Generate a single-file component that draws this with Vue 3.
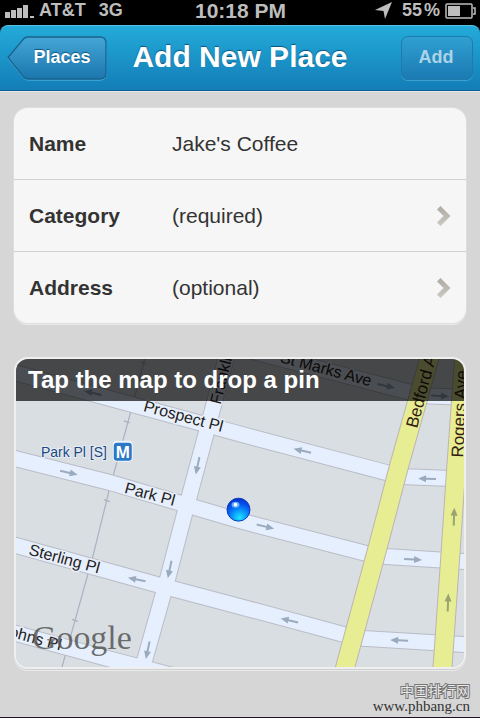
<template>
  <div class="page">
    <div class="top">
      <div class="status-bar">
        <div class="status-left">
          <svg class="signal" width="29" height="14" viewBox="0 0 29 14">
            <rect x="0" y="8" width="5" height="6" />
            <rect x="6" y="6" width="5" height="8" />
            <rect x="12" y="4" width="5" height="10" />
            <rect x="18" y="1" width="5" height="13" />
            <rect x="25" y="12" width="4" height="2" />
          </svg>
          <span>AT&amp;T</span>
          <span class="network">3G</span>
        </div>
        <span class="clock">10:18 PM</span>
        <div class="status-right">
          <svg width="17" height="17" viewBox="0 0 17 17">
            <path d="M17 0 L10 17 L8.500 9 L0 8 Z" />
          </svg>
          <span class="percent">55<span>%</span></span>
          <svg width="31" height="16" viewBox="0 0 31 16">
            <rect x="1" y="1" width="26" height="14" rx="1" fill="none" stroke="#bdbdbd" stroke-width="1.5" />
            <rect x="3" y="3" width="12" height="10" />
            <path d="M28 5 H30 V11 H28" fill="none" stroke="#bdbdbd" stroke-width="1.5" />
          </svg>
        </div>
      </div>

      <header class="nav-bar">
        <button type="button" class="back-button">
          <svg class="back-shape" width="100" height="45" viewBox="0 0 100 45">
            <defs>
              <linearGradient id="backFill" x1="0" y1="0" x2="0" y2="1">
                <stop offset="0" stop-color="#44a6d6" />
                <stop offset="1" stop-color="#1b76ae" />
              </linearGradient>
            </defs>
            <path d="M1 22.500 L16.500 4 Q18.500 2 21 2 H93 Q99 2 99 8 V38 Q99 44 93 44 H21 Q18.500 44 16.500 42 Z" fill="none" stroke="#5fb9e0" stroke-width="1" />
            <path d="M1 21.500 L16.500 3 Q18 1 21 1 H93 Q99 1 99 7 V37 Q99 43 93 43 H21 Q18 43 16.500 41 Z" fill="url(#backFill)" stroke="#17648f" stroke-width="1.3" />
          </svg>
          <span>Places</span>
        </button>
        <h1>Add New Place</h1>
        <button type="button" class="add-button">Add</button>
      </header>
    </div>

    <main>
      <form class="card" @submit.prevent>
        <div class="row">
          <label for="name">Name</label>
          <input id="name" v-model="name" type="text" />
        </div>
        <button v-for="field in fields" :key="field.label" type="button" class="row">
          <span class="label">{{ field.label }}</span>
          <span class="value">{{ field.value }}</span>
          <svg width="14" height="20" viewBox="0 0 14 20">
            <defs>
              <linearGradient id="chevronFill" x1="0" y1="0" x2="0" y2="1">
                <stop offset="0" stop-color="#aeaba5" />
                <stop offset="1" stop-color="#cbc9c3" />
              </linearGradient>
            </defs>
            <path d="M3.500 0 L13.500 10 L3.500 20 L0 16.500 L6.500 10 L0 3.500 Z" fill="url(#chevronFill)" />
          </svg>
        </button>
      </form>

      <section class="map-card">
        <svg class="map" viewBox="16 359 449 309">
          <defs>
            <radialGradient id="pinFill" cx="0.55" cy="0.85" r="0.85">
              <stop offset="0" stop-color="#1fe4ff" />
              <stop offset="0.35" stop-color="#0a9dfb" />
              <stop offset="0.7" stop-color="#0553ee" />
              <stop offset="1" stop-color="#0630c8" />
            </radialGradient>
          </defs>
          <rect x="16" y="359" width="449" height="309" fill="#d9dee2" />

          <g class="lane">
            <path d="M145 359 L131 412 L109 492 L93 557 L62 668" />
            <path d="M141 362 l6 2 M124 421 l6 2 M104 500 l6 2 M72 620 l6 2" />
          </g>

          <path v-for="road in streets" :key="'edge' + road" :d="road" class="street-edge" />
          <path v-for="road in streets" :key="road" :d="road" class="street" />
          <path v-for="road in avenues" :key="'edge' + road" :d="road" class="avenue-edge" />
          <path v-for="road in avenues" :key="road" :d="road" class="avenue" />

          <g
            v-for="arrow in arrows"
            :key="arrow.x + '-' + arrow.y"
            :class="['arrow', { dark: arrow.dark }]"
            :transform="`translate(${arrow.x} ${arrow.y}) rotate(${arrow.angle})`"
          >
            <path d="M-9 -1 H1 V-3.500 L9 0 L1 3.500 V1 H-9 Z" />
          </g>

          <text
            v-for="label in labels"
            :key="label.text"
            :class="['street-name', { plain: label.plain }]"
            :text-anchor="label.anchor"
            :transform="`translate(${label.x} ${label.y}) rotate(${label.angle})`"
          >{{ label.text }}</text>

          <text x="41" y="457" class="station">Park Pl [S]</text>
          <rect x="113" y="441" width="20" height="21" rx="4" fill="#eef4fb" />
          <rect x="114" y="443" width="18" height="18" rx="3" fill="#2b78c8" />
          <text x="123" y="458" class="metro" text-anchor="middle">M</text>

          <circle cx="239" cy="510" r="11.5" fill="url(#pinFill)" stroke="#0a3bc0" stroke-width="1" />
          <ellipse cx="236" cy="505" rx="4" ry="3" fill="#8fd4ff" opacity="0.7" />
          <circle cx="236" cy="505" r="1.8" fill="#fff" />

          <text x="32" y="650" class="google">Google</text>
        </svg>
        <p class="hint">Tap the map to drop a pin</p>
      </section>
    </main>

    <footer class="credit">
      <span class="site-name">中国排行网</span>
      <span class="site-url">www.phbang.cn</span>
    </footer>
  </div>
</template>

<script setup>
import { ref } from 'vue';

const name = ref("Jake's Coffee");

const fields = [
  { label: 'Category', value: '(required)' },
  { label: 'Address', value: '(optional)' }
];

const streets = [
  'M0 369 L16 373 L200 423 L240 434 L388 473 Q396 476 408 477 L480 480',
  'M0 455 L16 459 L111 483 L240 521 L367 554 Q377 556 387 557 L480 563',
  'M0 542 L16 546 L157 585 L240 607 L344 635 Q354 638 364 639 L480 646',
  'M0 630 L16 634 L107 659 L180 678',
  'M240 348 L282 359 L410 392 Q420 395 430 396 L480 398',
  'M230 345 L211 417 L185 514 L168 579 L141 675'
];

const avenues = [
  'M434 345 L400 466 L379 546 L344 675',
  'M466 345 L457 471 L451 561 L443 675'
];

const arrows = [
  { x: 93, y: 393, angle: 193 },
  { x: 387, y: 386, angle: 13 },
  { x: 441, y: 396, angle: 3 },
  { x: 198, y: 466, angle: 102 },
  { x: 69, y: 473, angle: 13 },
  { x: 303, y: 451, angle: 193 },
  { x: 428, y: 479, angle: 182 },
  { x: 455, y: 517, angle: -88, dark: true },
  { x: 266, y: 527, angle: 14 },
  { x: 414, y: 560, angle: 3 },
  { x: 137, y: 580, angle: 191 },
  { x: 170, y: 570, angle: 102 },
  { x: 449, y: 603, angle: -88, dark: true },
  { x: 290, y: 621, angle: 193 },
  { x: 400, y: 641, angle: 182 },
  { x: 148, y: 651, angle: 102 }
];

const labels = [
  { text: 'Prospect Pl', x: 143, y: 411, angle: 15 },
  { text: 'Park Pl', x: 124, y: 493, angle: 15 },
  { text: 'Sterling Pl', x: 28, y: 555, angle: 15 },
  { text: 'St Johns Pl', x: 60, y: 651, angle: 15, anchor: 'end' },
  { text: 'St Marks Ave', x: 280, y: 362, angle: 15 },
  { text: 'Franklin Ave', x: 221, y: 405, angle: -76 },
  { text: 'Bedford Ave', x: 418, y: 429, angle: -75, plain: true },
  { text: 'Rogers Ave', x: 464, y: 458, angle: -87, plain: true }
];
</script>

<style>
body {
  margin: 0;
}
</style>

<style scoped>
.page {
  display: flex;
  flex-direction: column;
  box-sizing: border-box;
  min-height: 100vh;
  background: #d6d6d6;
  border-bottom: 1px solid #1d1226;
  font-family: "Liberation Sans", Arial, sans-serif;
  color: #333;
}

.top {
  background: #000;
  border-bottom: 1px solid #e6e6e6;
}

.status-bar {
  display: grid;
  grid-template-columns: 1fr auto 1fr;
  align-items: center;
  padding: 0 4px 4px 5px;
  color: #bdbdbd;
  fill: #bdbdbd;
  font-size: 18px;
  font-weight: bold;
  line-height: 21px;
}

.status-left,
.status-right {
  display: flex;
  align-items: center;
  gap: 5px;
}

.status-right {
  justify-content: flex-end;
}

.network {
  margin-left: 8px;
}

.clock {
  font-size: 21px;
}

.percent {
  display: flex;
  gap: 2px;
  margin-left: 5px;
}

.nav-bar {
  display: grid;
  grid-template-columns: 100px 1fr 100px;
  align-items: center;
  height: 64px;
  padding: 0 7px;
  border-top: 1px solid #58c0e4;
  border-bottom: 1px solid #0c6093;
  border-radius: 8px 8px 0 0;
  background: linear-gradient(#23abd9, #137db7);
}

.nav-bar h1 {
  margin: 0;
  padding-bottom: 2px;
  text-align: center;
  white-space: nowrap;
  font-size: 30px;
  line-height: 36px;
  color: #fff;
  text-shadow: 0 -1px 1px #0b5580;
}

.nav-bar button {
  font-family: inherit;
  font-size: 18px;
  font-weight: bold;
  cursor: pointer;
}

.back-button {
  position: relative;
  height: 45px;
  padding: 0 0 2px 10px;
  border: none;
  background: none;
  color: #fff;
  text-shadow: 0 -1px 1px #0b5580;
}

.back-shape {
  position: absolute;
  top: 0;
  left: 0;
}

.back-button span {
  position: relative;
}

.add-button {
  justify-self: end;
  width: 72px;
  height: 44px;
  padding: 0 2px 2px 0;
  border: 1px solid #1d7cab;
  border-radius: 7px;
  background: linear-gradient(#309fd1, #1b7ab3);
  box-shadow: 0 1px 0 #3fa0cf;
  color: #abd3e8;
}

main {
  display: flex;
  flex-direction: column;
  gap: 34px;
  padding: 16px 14px 0;
}

.card {
  overflow: hidden;
  border-radius: 14px;
  background: #f6f6f6;
  box-shadow: 0 0 0 1px #dedede, 0 2px 0 #ebebeb;
}

.row {
  display: flex;
  align-items: center;
  box-sizing: border-box;
  width: 100%;
  height: 72px;
  padding: 0 15px;
  border: none;
  border-top: 1px solid #d2d2d2;
  background: none;
  color: #333;
  font-family: inherit;
  font-size: 21px;
  text-align: left;
}

.row:first-child {
  height: 71px;
  border-top: none;
}

button.row {
  cursor: pointer;
}

.row label,
.row .label {
  flex: 0 0 143px;
  font-weight: bold;
}

.row input,
.row .value {
  flex: 1;
  min-width: 0;
}

.row input {
  padding: 0;
  border: none;
  outline: none;
  background: none;
  color: inherit;
  font: inherit;
}

.map-card {
  position: relative;
  overflow: hidden;
  border: 2px solid #efefef;
  border-radius: 14px;
  box-shadow: 0 1px 0 #cfcfcf, 0 2px 0 #ebebeb;
}

.map {
  display: block;
  width: 100%;
  height: auto;
}

.lane {
  fill: none;
  stroke: #a9b1c2;
  stroke-width: 1.2;
}

.street,
.street-edge,
.avenue,
.avenue-edge {
  fill: none;
}

.street-edge {
  stroke: #babcc6;
  stroke-width: 17px;
}

.street {
  stroke: #e6effd;
  stroke-width: 15px;
}

.avenue-edge {
  stroke: #bdb4b4;
  stroke-width: 20px;
}

.avenue {
  stroke: #e7ed92;
  stroke-width: 18px;
}

.arrow {
  fill: #9aabc0;
}

.arrow.dark {
  fill: #98a472;
}

.street-name {
  font-size: 16px;
  fill: #222;
  stroke: #e9f0fb;
  stroke-width: 3px;
  stroke-linejoin: round;
  paint-order: stroke;
}

.street-name.plain {
  font-size: 17px;
  fill: #351c12;
  stroke: none;
}

.station {
  font-size: 14px;
  fill: #1b4780;
  stroke: #e6edf5;
  stroke-width: 2px;
  paint-order: stroke;
}

.metro {
  font-size: 17px;
  font-weight: bold;
  fill: #fff;
}

.google {
  font-family: "Liberation Serif", "Times New Roman", serif;
  font-size: 34px;
  fill: #555;
  fill-opacity: 0.85;
}

.hint {
  position: absolute;
  top: 0;
  left: 0;
  right: 0;
  margin: 0;
  padding: 0 12px;
  background: rgba(0, 0, 0, 0.68);
  color: #fff;
  font-size: 24px;
  font-weight: bold;
  line-height: 42px;
}

.credit {
  display: flex;
  flex-direction: column;
  align-items: flex-end;
  margin-top: auto;
  padding: 0 10px 2px;
}

.site-name {
  font-family: "Noto Sans CJK SC", sans-serif;
  font-size: 14px;
  line-height: 15px;
  color: #e8e8e8;
  -webkit-text-stroke: 2px #777;
  paint-order: stroke fill;
}

.site-url {
  font-family: "Liberation Serif", "Times New Roman", serif;
  font-size: 15px;
  line-height: 17px;
  color: #333;
}
</style>
